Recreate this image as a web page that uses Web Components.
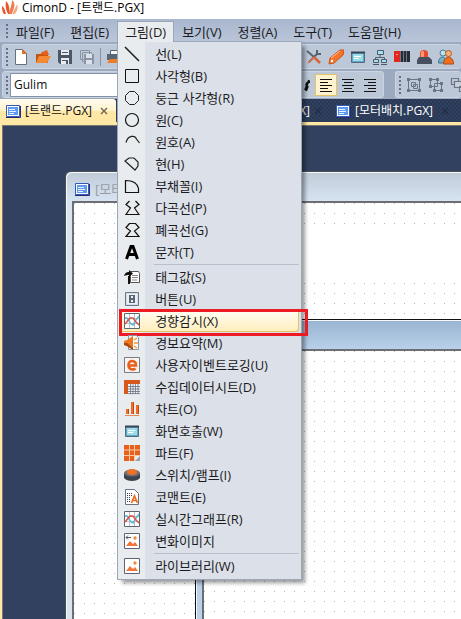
<!DOCTYPE html>
<html lang="ko">
<head>
<meta charset="utf-8">
<title>CimonD</title>
<style>
    html, body { margin: 0; height: 100%; }
    body {
        font-family: "Open Sans", "Noto Sans CJK KR", sans-serif;
        font-size: 13px;
        line-height: 20px;
        color: #1b1b22;
        overflow: hidden;
    }
</style>
</head>
<body>

<app-frame>
    <title-bar slot="title">CimonD - [트랜드.PGX]</title-bar>

    <menu-bar slot="menu">
        <menu-title>파일(F)</menu-title>
        <menu-title>편집(E)</menu-title>
        <menu-title open>그림(D)
            <drop-menu slot="menu">
                <menu-entry icon="line">선(L)</menu-entry>
                <menu-entry icon="rect">사각형(B)</menu-entry>
                <menu-entry icon="round">둥근 사각형(R)</menu-entry>
                <menu-entry icon="circle">원(C)</menu-entry>
                <menu-entry icon="arc">원호(A)</menu-entry>
                <menu-entry icon="chord">현(H)</menu-entry>
                <menu-entry icon="pie">부채꼴(I)</menu-entry>
                <menu-entry icon="poly">다곡선(P)</menu-entry>
                <menu-entry icon="closed">폐곡선(G)</menu-entry>
                <menu-entry icon="text">문자(T)</menu-entry>
                <menu-divider></menu-divider>
                <menu-entry icon="tagvalue">태그값(S)</menu-entry>
                <menu-entry icon="button">버튼(U)</menu-entry>
                <menu-entry icon="trend" selected>경향감시(X)</menu-entry>
                <menu-entry icon="alarm">경보요약(M)</menu-entry>
                <menu-entry icon="event">사용자이벤트로깅(U)</menu-entry>
                <menu-entry icon="sheet">수집데이터시트(D)</menu-entry>
                <menu-entry icon="chart">차트(O)</menu-entry>
                <menu-entry icon="screen">화면호출(W)</menu-entry>
                <menu-entry icon="parts">파트(F)</menu-entry>
                <menu-entry icon="lamp">스위치/램프(I)</menu-entry>
                <menu-entry icon="comment">코맨트(E)</menu-entry>
                <menu-entry icon="trend">실시간그래프(R)</menu-entry>
                <menu-entry icon="change">변화이미지</menu-entry>
                <menu-divider></menu-divider>
                <menu-entry icon="image">라이브러리(W)</menu-entry>
            </drop-menu>
        </menu-title>
        <menu-title>보기(V)</menu-title>
        <menu-title>정렬(A)</menu-title>
        <menu-title>도구(T)</menu-title>
        <menu-title>도움말(H)</menu-title>
    </menu-bar>

    <tool-row slot="tools">
        <tool-group grow>
            <tool-button icon="new" label="새로 만들기"></tool-button>
            <tool-button icon="open" label="열기"></tool-button>
            <tool-button icon="save" label="저장"></tool-button>
            <tool-button icon="saveall" label="모두 저장"></tool-button>
            <tool-divider></tool-divider>
            <tool-button icon="print" label="인쇄"></tool-button>
            <tool-space></tool-space>
            <tool-button icon="tools" label="설정"></tool-button>
            <tool-button icon="tag" label="태그"></tool-button>
            <tool-button icon="screen" label="화면"></tool-button>
            <tool-button icon="network" label="네트워크"></tool-button>
            <tool-button icon="plc" label="PLC"></tool-button>
            <tool-button icon="siren" label="경보"></tool-button>
            <tool-button icon="users" label="사용자"></tool-button>
            <tool-button icon="dots" label="데이터"></tool-button>
        </tool-group>
    </tool-row>

    <tool-row slot="tools" tall>
        <tool-group>
            <font-box value="Gulim"></font-box>
            <tool-button icon="italic" label="글꼴"></tool-button>
            <tool-button icon="left" label="왼쪽" pressed></tool-button>
            <tool-button icon="center" label="가운데"></tool-button>
            <tool-button icon="right" label="오른쪽"></tool-button>
        </tool-group>
        <tool-group grow>
            <tool-button icon="group" label="그룹"></tool-button>
            <tool-button icon="ungroup" label="그룹 해제"></tool-button>
            <tool-button icon="front" label="맨 앞으로"></tool-button>
        </tool-group>
    </tool-row>

    <tab-strip slot="tabs">
        <doc-tab active>[트랜드.PGX]</doc-tab>
        <doc-tab wide>[모터.PGX]</doc-tab>
        <doc-tab>[모터배치.PGX]</doc-tab>
    </tab-strip>

    <mdi-window style="left: 62px; top: 45px">[모터]
        <blank-shape slot="shapes"></blank-shape>
    </mdi-window>
    <mdi-window active style="left: 192px; top: 193px"></mdi-window>
</app-frame>

<script>
const PICTURE = '<path fill="#fff" stroke="#5d6478" d="M.5.5h15v15H.5z"/><path fill="#f0763a" d="M2 13l4-5 3 3 2-2 3 4z"/><circle cx="11" cy="5" r="1.7" fill="#f08a3c"/>';

const ICONS = {
    logo: '<path fill="#e8552b" d="M2 14C0 12 0 8 0 6c3 2 3 5 4 8zM6 14C4 10 3 6 4 1c4 4 3 8 4 13z"/><path fill="#f07c4e" d="M8 14C7 9 10 6 10 0c5 5 1 9 0 14z"/><path fill="#f6a983" d="M11 14c0-4 3-6 4-10 2 5-1 8-2 10z"/>',
    doc: '<path fill="#fff" stroke="#3559b5" d="M1.5 2.5h13v11h-13z"/><path fill="#5e9bf0" d="M3 4h10v8H3z"/><path stroke="#e8f3ff" d="M4 6.500h6M4 8.500h7M4 10.500h5"/><path stroke="#242e78" d="M1 14.500h14.500V3"/>',
    line: '<path stroke="#222" stroke-width="1.600" d="M1 1l14 14"/>',
    rect: '<path fill="none" stroke="#111" d="M1.500 1.500h13v13h-13z"/>',
    round: '<path fill="none" stroke="#222" d="M5.500 1.500h5l4 4v5l-4 4h-5l-4-4v-5z"/>',
    circle: '<circle cx="8" cy="8" r="6.500" fill="none" stroke="#111" stroke-width="1.200"/>',
    arc: '<path fill="none" stroke="#222" stroke-width="1.200" d="M2 8.500C4 1 11 1 12.500 5l3 4"/>',
    chord: '<path fill="none" stroke="#222" stroke-width="1.200" d="M1 5l4-3h5l4 4v4l-3 4z"/>',
    pie: '<path fill="none" stroke="#111" stroke-width="1.200" d="M1.500 14.500v-12c7 0 12 3 13 8v4z"/>',
    poly: '<path fill="none" stroke="#111" stroke-width="1.200" d="M5.500 1L2 4.500 6.500 8 2 14.500h13L10.500 8 15 4.500 11.500 1"/>',
    closed: '<path fill="none" stroke="#111" stroke-width="1.200" d="M5.500 1.500L2 5.500 6.500 9 2 14.500h13L10.500 9 15 5.500l-3.500-4z"/>',
    text: '<path fill="none" stroke="#000" stroke-width="3" d="M2.500 15L7 2.500h2L13.500 15M4 10.500h8"/>',
    tagvalue: '<path fill="#fff" stroke="#555" d="M6.500 2.500h8l1 2v9h-9z"/><path stroke="#888" d="M8 6.500h6M8 8.500h6M8 11h5"/><path fill="#111" d="M0 7c1-4 4-4 5-4V1l4 3.500L5 8V6C3 6 2 6 0 7z"/><path stroke="#111" stroke-width="2" d="M5 7v8"/>',
    button: '<path fill="#d3dde6" stroke="#687889" d="M1.500 1.500h13v13h-13z"/><path fill="#eaf0f5" d="M3 3h10v10H3z"/><path fill="#5a6674" d="M5 4h6v8H5z"/><path fill="#eaf0f5" d="M7 5h2v2H7zM7 9h2v2H7z"/>',
    trend: '<path fill="#fff" stroke="#5f6672" d="M.5.5h15v15H.5z"/><path stroke="#b9bec8" d="M5.500 1v14M10.500 1v14M1 5.500h14M1 10.500h14"/><path fill="none" stroke="#58b8d0" stroke-width="1.400" d="M1 5l2 0 4 6 2 1 3-5 3-4"/><path fill="none" stroke="#e05040" stroke-width="1.500" d="M1 11l5-6h3l3 4 3 3"/>',
    alarm: '<path fill="#f7f8fa" stroke="#8a96a6" d="M4.500.5h8l2 2v12h-10z"/><path fill="#ee7420" d="M0 6l3-1 6-4v14l-6-4-3-1z"/><path fill="#a64a10" d="M0 8h3l6 5v2l-6-4-3-1z"/><path stroke="#f29a3c" stroke-width="1.500" d="M10 8h4M10 5l3-2M10 11l3 2"/>',
    event: '<path fill="#f7f3ee" stroke="#777c88" d="M.5.5h15v15H.5z"/><path fill="none" stroke="#e8601c" stroke-width="2.600" d="M4 8.500h8C12 2.500 4.500 2.500 4.500 8c0 5 5 5 7 3.500"/>',
    sheet: '<path fill="#d8571a" d="M0 1h16v4H0zM0 5h4v10H0z"/><path fill="#f4f5f8" d="M4 5h12v10H4z"/><path stroke="#667080" stroke-width=".8" d="M4 7.500h12M4 10h12M4 12.500h12M4 14.600h12M6.500 5v10M9 5v10M11.500 5v10M14 5v10"/>',
    chart: '<path fill="#ef6d26" d="M2 8h3v5H2zM7 1h3v12H7zM12 4h3v9h-3z"/><path fill="#c24b10" d="M4 8h1v5H4zM9 1h1v12H9zM14 4h1v9h-1z"/><path stroke="#e08a58" d="M1 14.500h14"/>',
    screen: '<path fill="#5ba9c5" stroke="#59697e" d="M1.500 3.500h13v10h-13z"/><path fill="#9fdbe8" d="M3 5h10v7H3z"/><path stroke="#fff" d="M4 7.500h7M4 9.500h5"/><path stroke="#39465a" stroke-width="2" d="M1 3.500h14"/>',
    parts: '<path fill="#e65f1c" d="M0 0h16v11h-5v5H0z"/><path fill="#9aa0aa" d="M16 11v5h-5z"/><path stroke="#fbc7a0" d="M0 5h16M0 10.500h16M5.500 0v16M10.500 0v16"/>',
    lamp: '<path fill="#3d434b" d="M0 6h16v5c-3 4-13 4-16 0z"/><ellipse cx="8" cy="6" rx="8" ry="3.500" fill="#666e78"/><ellipse cx="8" cy="5" rx="5.500" ry="3" fill="#ee7028"/>',
    comment: '<path fill="#fff" stroke="#6b7280" d="M1.500.5h9l4 4v11h-13z"/><path stroke="#333c48" stroke-dasharray="1 1" d="M3 4.500h6M3 6.500h6M3 8.500h4M3 10.500h3M3 12.500h3"/><path fill="none" stroke="#ec6d20" stroke-width="1.700" d="M7.500 14L10.500 7l3 7M8.500 11.500h4"/>',
    change: PICTURE + '<path stroke="#505868" d="M2 4.500h5M4 2.500L2 4.500l2 2"/>',
    image: PICTURE,
    new: '<path fill="#fff" stroke="#65707f" d="M2.500.5h7l4 4v11h-11z"/><path fill="#e86c30" d="M9 0l5 5H9z"/>',
    open: '<path fill="#c9540f" d="M1 5h5l1-2h6v11H1z"/><path fill="#f58a35" d="M4 7h12l-4 7H1z"/><path fill="#e5621c" d="M7 3l5-2 2 5H8z"/>',
    save: '<path fill="#4d5866" d="M1 1h14v14H3l-2-2z"/><path fill="#e9edf2" d="M4 1h8v5H4zM4 9h8v6H4z"/><path stroke="#4d5866" d="M5 3.500h6M5 11.500h5"/><path fill="#4d5866" d="M9 11h2v4H9z"/>',
    saveall: '<path fill="#c4cdd9" stroke="#8994a4" d="M1.500 1.500h9v9h-9zM3.500 3.500h9v9h-9z"/><path fill="#8994a4" d="M5 5h10v10H5z"/><path fill="#dbe2ea" d="M7 5h6v4H7zM7 11h6v4H7z"/>',
    print: '<path fill="#f4f6f8" stroke="#59626f" d="M4.500 1.500h9v5h-9z"/><path fill="#596675" d="M1 5h15v6H1z"/><path fill="#f07c28" d="M4 10h12v4H1z"/>',
    tools: '<path stroke="#59616d" stroke-width="2" d="M1 2l7 6M3 13l9-9"/><path stroke="#d9653c" stroke-width="2.600" d="M8 8l6 6"/><path stroke="#e0754c" stroke-width="1.600" d="M2 14l6-6"/><path fill="none" stroke="#59616d" stroke-width="2" d="M11 1v4h4"/>',
    tag: '<path fill="#f4742c" stroke="#cf5218" d="M2 9L12 1l4 0-1 5L6 14l-5 1z"/><path stroke="#ffc198" d="M3 9l9-7"/><circle cx="4" cy="12" r="1.200" fill="#fff"/>',
    network: '<path fill="none" stroke="#566273" d="M8 6v3M3.500 11V8.500h9V11"/><path fill="#a8e2ee" stroke="#4a5a6c" d="M5.500 1.500h6v4h-6zM1.500 10.500h5v3h-5zM9.500 10.500h5v3h-5z"/><path stroke="#4a5a6c" d="M1 15.500h6M9 15.500h6"/>',
    plc: '<path fill="#262c35" d="M0 2h16v11H0z"/><path fill="#e02822" d="M0 2h6v11H0z"/><path stroke="#6d7683" d="M6.500 2v11M9.500 2v11M12.500 2v11"/><path stroke="#ff9a8a" d="M2 5.500h2"/>',
    siren: '<path fill="#ea4a2c" d="M4 9V4c0-4 8-4 8 0v5z"/><path fill="#ff9c7c" d="M5 4c0-2 3-3 3-1v5H5z"/><path fill="#46505e" d="M3 8h10l3 3v4H1v-4z"/>',
    users: '<circle cx="5" cy="4" r="3" fill="#bfe0ea" stroke="#4a7f92"/><path fill="#6fb4c8" stroke="#3b7186" d="M.5 14c0-8 8-8 8 0z"/><circle cx="10.500" cy="4.500" r="3" fill="#f4b27a" stroke="#b45a20"/><path fill="#ef6f20" stroke="#b24812" d="M5.500 15c0-9 10-9 10 0z"/>',
    dots: '<path fill="#ef6428" d="M3 4h3v3H3zM3 8h3v3H3zM3 12h3v3H3zM8 4h3v3H8z"/>',
    italic: '<path fill="none" stroke="#111" stroke-width="2" d="M13 3L9 13M14 5c-4 0-5 4-2 4M12 9l-2 5"/>',
    left: '<path stroke="#111" d="M2 2.500h12M2 5.500h8M2 8.500h12M2 11.500h8M2 14.500h12"/>',
    center: '<path stroke="#111" d="M2 2.500h12M4 5.500h8M2 8.500h12M4 11.500h8M2 14.500h12"/>',
    right: '<path stroke="#111" d="M2 2.500h12M6 5.500h8M2 8.500h12M6 11.500h8M2 14.500h12"/>',
    group: '<path fill="none" stroke="#6a7483" d="M2.500 2.500h11v11h-11zM5.500 5.500h4v4h-4z"/><path fill="none" stroke="#6a7483" d="M7.500 7.500h4v4h-4z"/><path fill="#6a7483" d="M1 1h3v3H1zM12 1h3v3h-3zM1 12h3v3H1zM12 12h3v3h-3z"/>',
    ungroup: '<path fill="none" stroke="#6a7483" d="M2.500 2.500h7v7h-7zM6.500 6.500h7v7h-7z"/><path fill="#6a7483" d="M1 1h3v3H1zM8 1h3v3H8zM1 8h3v3H1zM12 5h3v3h-3zM5 12h3v3H5zM12 12h3v3h-3z"/>',
    front: '<path fill="none" stroke="#6a7483" stroke-width="1.200" d="M1.500 1.500h7v6h-7z"/><path fill="#c8d0dd" stroke="#6a7483" stroke-width="1.200" d="M4.500 4.500h7v6h-7zM9.500 9.500h6v5h-6z"/>',
};

const svg = (name) => `<svg viewBox="0 0 16 16" width="16" height="16" fill="none" aria-hidden="true">${ICONS[name] || ''}</svg>`;

// Every element renders once from its own CSS and html()
class BaseElement extends HTMLElement {

    constructor() {
        super();
        this.attachShadow({ mode: 'open' });
    }

    connectedCallback() {
        this.shadowRoot.innerHTML = `<style>
            * { box-sizing: border-box }
            svg { display: block; flex: none }
            button { font: inherit; color: inherit; background: none; border: 0; padding: 0; margin: 0 }
            ${this.constructor.CSS}
        </style>${this.html()}`;
    }

    html() {
        return '<slot></slot>';
    }
}

class AppFrame extends BaseElement {
    static CSS = `
        :host { display: flex; flex-direction: column; height: 100%; background: #9ba9c1 }
        slot[name="menu"]::slotted(*) { z-index: 2 }
        main {
            flex: 1; min-height: 0;
            border: solid #ffe8a6; border-width: 3px 0 0 2px;
            background: #31415f;
        }
        .canvas {
            position: relative; overflow: hidden; height: 100%;
            border: solid #77796f; border-width: 1px 0 0 1px;
        }
    `;
    html() {
        return `<slot name="title"></slot><slot name="menu"></slot><slot name="tools"></slot>
            <slot name="tabs"></slot><main><div class="canvas"><slot></slot></div></main>`;
    }
}

class TitleBar extends BaseElement {
    static CSS = `
        :host {
            display: flex; align-items: center; gap: 4px;
            height: 19px; padding: 0 2px 4px; box-sizing: border-box;
            background: #fff; color: #000; font-size: 12px; white-space: nowrap;
        }
    `;
    html() {
        return `${svg('logo')}<slot></slot>`;
    }
}

class MenuBar extends BaseElement {
    static CSS = `
        :host {
            display: flex; align-items: stretch; position: relative;
            height: 23px; padding: 2px 0 0 6px; box-sizing: border-box;
            background: linear-gradient(#a9b7cf, #bac5d8);
        }
        i { width: 2px; margin: 3px 0 4px; background: repeating-linear-gradient(#60708d 0 2px, transparent 2px 4px) }
    `;
    html() {
        return '<i></i><slot></slot>';
    }
}

class MenuTitle extends BaseElement {
    static CSS = `
        :host { display: block; position: relative; white-space: nowrap }
        button { display: block; height: 21px; padding: 0 7px; border: 1px solid transparent; border-bottom: 0; line-height: 20px }
        :host([open]) button { position: relative; z-index: 1; background: #e9ecee; border-color: #9ba7b7 }
        .drop { position: absolute; left: 0; top: 20px }
    `;
    html() {
        const open = this.hasAttribute('open');
        return `<button type="button" aria-haspopup="menu" aria-expanded="${open}"><slot></slot></button>
            ${open ? '<div class="drop"><slot name="menu"></slot></div>' : ''}`;
    }
}

class DropMenu extends BaseElement {
    static CSS = `
        :host {
            display: block; min-width: 185px; padding: 1px 2px 2px 0; box-sizing: border-box;
            border: 1px solid #9ba7b7;
            background: linear-gradient(90deg, #e9ecee 27px, #dce0e9 27px);
            box-shadow: 4px 4px 4px -1px rgba(0, 0, 0, .4);
        }
    `;
    html() {
        return '<div role="menu"><slot></slot></div>';
    }
}

class MenuEntry extends BaseElement {
    static CSS = `
        :host { display: block; position: relative }
        button {
            display: flex; align-items: center; gap: 15px;
            width: 100%; height: 22px; padding: 0 14px 0 6px;
            white-space: nowrap; text-align: left;
        }
        :host([selected]) button {
            border-radius: 3px;
            background: linear-gradient(#fffdf4, #ffeebb);
            box-shadow: inset -1px -1px #e5c365;
        }
        :host([selected])::after {
            content: '';
            position: absolute; inset: -1px -9px -4px 1px;
            border: 3px solid #ed1c24;
        }
    `;
    html() {
        return `<button type="button" role="menuitem">${svg(this.getAttribute('icon'))}<span><slot></slot></span></button>`;
    }
}

class MenuDivider extends BaseElement {
    static CSS = ':host { display: block; height: 1px; margin: 1px 0 1px 36px; background: #b9bfcc }';
    html() {
        return '';
    }
}

class ToolRow extends BaseElement {
    static CSS = `
        :host { display: flex; gap: 11px; height: 27px; padding: 2px 0 0 2px; box-sizing: border-box; overflow: hidden; flex: none }
        :host([tall]) { height: 30px; padding-bottom: 1px }
    `;
}

class ToolGroup extends BaseElement {
    static CSS = `
        :host {
            display: flex; align-items: center; flex: none;
            padding-left: 3px; padding-right: 2px;
            border: 1px solid #cbd5e2; border-radius: 3px;
            background: #bcc7d8; box-sizing: border-box;
        }
        :host([grow]) { flex: 1 0 0; min-width: 0; border-right: 0 }
        i { width: 2px; height: 18px; margin-right: 2px; flex: none; background: repeating-linear-gradient(#60708d 0 2px, transparent 2px 4px) }
    `;
    html() {
        return '<i></i><slot></slot>';
    }
}

class ToolButton extends BaseElement {
    static CSS = `
        :host { display: block; flex: none }
        button { display: flex; align-items: center; justify-content: center; width: 22px; height: 22px; border: 1px solid transparent }
        :host([pressed]) button { background: #fff3cf; border-color: #e5c365 }
    `;
    html() {
        return `<button type="button" aria-label="${this.getAttribute('label')}">${svg(this.getAttribute('icon'))}</button>`;
    }
}

class ToolDivider extends BaseElement {
    static CSS = ':host { display: block; flex: none; width: 1px; height: 18px; margin: 0 2px; background: #8592a8 }';
}

// part of the strip that lies behind the open menu
class ToolSpace extends BaseElement {
    static CSS = ':host { display: block; flex: none; width: 178px }';
}

class FontBox extends BaseElement {
    static CSS = `
        :host { display: block; flex: none }
        input {
            display: block; width: 283px; height: 24px; padding: 0 3px;
            border: 1px solid #8592a8; background: #fff; color: #111; font: inherit; font-size: 12px; outline: 0;
        }
    `;
    html() {
        return `<input type="text" aria-label="글꼴 이름" value="${this.getAttribute('value')}">`;
    }
}

class TabStrip extends BaseElement {
    static CSS = `
        :host {
            display: flex; flex: none; height: 23px; overflow: hidden;
            background: repeating-conic-gradient(#293955 0 25%, #31415f 0 50%) 0 0 / 4px 4px;
        }
    `;
}

class DocTab extends BaseElement {
    static CSS = `
        :host {
            display: flex; align-items: center; flex: none; gap: 4px;
            padding: 0 5px; color: #fff; font-size: 12px; white-space: nowrap;
        }
        :host([wide]) { width: 214px; gap: 0; box-sizing: border-box; justify-content: flex-end }
        :host([active]) { background: linear-gradient(#fffbef, #fff3cd 50%, #ffe8a6 50%); color: #111; border-radius: 0 3px 0 0 }
        button { display: flex; align-items: center }
        .name { gap: 4px }
        .close { width: 14px; justify-content: center; margin-left: 1px; color: #222f49 }
        :host([active]) .close { color: #6f654a }
    `;
    html() {
        return `<button class="name" type="button">${svg('doc')}<span><slot></slot></span></button>
            <button class="close" type="button" aria-label="닫기">
                <svg viewBox="0 0 8 8" width="8" height="8"><path stroke="currentColor" stroke-width="1.400" d="M1 1l6 6M7 1L1 7"/></svg>
            </button>`;
    }
}

class MdiWindow extends BaseElement {
    static CSS = `
        :host {
            position: absolute; right: -12px; bottom: -12px;
            display: flex; flex-direction: column; padding: 0 6px 6px; box-sizing: border-box;
            border: 1px solid #4a4f58; border-radius: 6px 6px 0 0;
            background: linear-gradient(#c0cbd8, #d7e4f1 30px);
            box-shadow: inset 1px 1px #f4f8fb;
        }
        :host([active]) { border-color: #111; border-radius: 0; background: linear-gradient(#99b4d1, #b9d1ea 30px) }
        header { display: flex; align-items: center; gap: 5px; height: 29px; padding: 5px 0 0 2px; color: #999ca1; white-space: nowrap }
        :host([active]) header { visibility: hidden }
        .page {
            flex: 1; position: relative;
            border: solid #6c6e72; border-width: 2px 0 0 2px;
            background: radial-gradient(circle at .5px .5px, #b4b4b4 1px, transparent 1px) 0 0 / 10px 10px #fff;
        }
    `;
    html() {
        return `<header>${svg('doc')}<span><slot></slot></span></header><div class="page"><slot name="shapes"></slot></div>`;
    }
}

// white box placed on the page, it hides the grid
class BlankShape extends BaseElement {
    static CSS = ':host { position: absolute; left: 54px; right: 0; top: 24px; height: 52px; background: #fff }';
}

customElements.define('app-frame', AppFrame);
customElements.define('title-bar', TitleBar);
customElements.define('menu-bar', MenuBar);
customElements.define('menu-title', MenuTitle);
customElements.define('drop-menu', DropMenu);
customElements.define('menu-entry', MenuEntry);
customElements.define('menu-divider', MenuDivider);
customElements.define('tool-row', ToolRow);
customElements.define('tool-group', ToolGroup);
customElements.define('tool-button', ToolButton);
customElements.define('tool-divider', ToolDivider);
customElements.define('tool-space', ToolSpace);
customElements.define('font-box', FontBox);
customElements.define('tab-strip', TabStrip);
customElements.define('doc-tab', DocTab);
customElements.define('mdi-window', MdiWindow);
customElements.define('blank-shape', BlankShape);
</script>
</body>
</html>
